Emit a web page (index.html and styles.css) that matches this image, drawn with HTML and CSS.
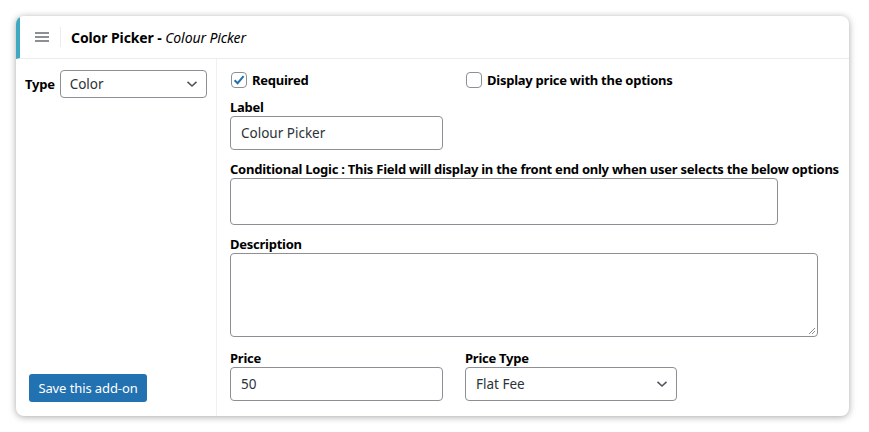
FILE: index.html
```html
<!DOCTYPE html>
<html>
<head>
<meta charset="utf-8">
<link rel="stylesheet" href="styles.css">
</head>
<body>
<div class="card">
  <div class="header">
    <span class="menu">
      <svg width="14" height="10" viewBox="0 0 14 10"><rect x="0" y="0" width="14" height="2" fill="#8c8f94"/><rect x="0" y="4" width="14" height="2" fill="#8c8f94"/><rect x="0" y="8" width="14" height="2" fill="#8c8f94"/></svg>
    </span>
    <span class="sep"></span>
    <span class="title"><b>Color Picker - </b><i>Colour Picker</i></span>
  </div>
  <div class="main">
    <div class="left">
      <div class="type-row">
        <span class="lbl">Type</span>
        <div class="select type-select"><span>Color</span>
          <svg class="chev" width="12" height="8" viewBox="0 0 12 8"><path d="M1.5 1.8 L6 6 L10.5 1.8" fill="none" stroke="#50575e" stroke-width="1.6"/></svg>
        </div>
      </div>
      <button class="save">Save this add-on</button>
    </div>
    <div class="right">
      <div class="row2 checks">
        <label class="check"><span class="box checked"><svg width="14" height="14" viewBox="0 0 14 14"><path d="M2.6 7.2 L5.6 10.2 L11.6 3.2" fill="none" stroke="#2271b1" stroke-width="2"/></svg></span><span class="lbl">Required</span></label>
        <label class="check"><span class="box"></span><span class="lbl">Display price with the options</span></label>
      </div>
      <div class="group">
        <span class="lbl">Label</span>
        <div class="input w213">Colour Picker</div>
      </div>
      <div class="group">
        <span class="lbl">Conditional Logic : This Field will display in the front end only when user selects the below options</span>
        <div class="input cond"></div>
      </div>
      <div class="group">
        <span class="lbl">Description</span>
        <div class="input desc">
          <svg class="grip" width="8" height="8" viewBox="0 0 8 8"><path d="M7 1 L1 7 M7 4 L4 7" stroke="#8c8f94" stroke-width="1"/></svg>
        </div>
      </div>
      <div class="row2 price-row">
        <div class="group">
          <span class="lbl">Price</span>
          <div class="input w213">50</div>
        </div>
        <div class="group">
          <span class="lbl">Price Type</span>
          <div class="select price-select"><span>Flat Fee</span>
            <svg class="chev" width="12" height="8" viewBox="0 0 12 8"><path d="M1.5 1.8 L6 6 L10.5 1.8" fill="none" stroke="#50575e" stroke-width="1.6"/></svg>
          </div>
        </div>
      </div>
    </div>
  </div>
</div>
</body>
</html>
```

FILE: styles.css
```css
* { box-sizing: border-box; }
body {
  margin: 0;
  padding: 16px 20px 16px 16px;
  background: #fff;
  font-family: "Noto Sans", "DejaVu Sans", sans-serif;
  color: #1d2327;
}
.card {
  width: 833px;
  height: 400px;
  background: #fff;
  border-radius: 8px;
  box-shadow: 0 1px 7px rgba(0,0,0,0.35);
  overflow: hidden;
  display: flex;
  flex-direction: column;
}
.header {
  height: 43px;
  flex: none;
  border-left: 4px solid #3fa9c2;
  border-bottom: 1px solid #ececec;
  display: flex;
  align-items: center;
  padding-left: 15px;
}
.menu { display: flex; width: 14px; }
.sep {
  width: 1px;
  height: 20px;
  background: #ececec;
  margin-left: 11px;
  margin-right: 10px;
}
.title { font-size: 14px; color: #000; letter-spacing: -0.1px; }
.title b { font-weight: 700; }
.main { flex: 1; display: flex; }
.left {
  width: 201px;
  flex: none;
  border-right: 1px solid #f0f0f0;
  padding: 11px 9px 14px 9px;
  display: flex;
  flex-direction: column;
  justify-content: space-between;
}
.type-row { display: flex; align-items: center; gap: 5px; }
.lbl {
  font-size: 13px;
  font-weight: 700;
  color: #000;
  line-height: 16px;
  letter-spacing: -0.25px;
}
.select, .input {
  border: 1px solid #8c8f94;
  border-radius: 4px;
  background: #fff;
  font-size: 13.5px;
  color: #2c3338;
  display: flex;
  align-items: center;
  position: relative;
}
.select { justify-content: space-between; padding: 0 8px 0 9px; }
.type-select { width: 148px; height: 28px; }
.price-select { width: 212px; height: 34px; padding-left: 10px; }
.chev { flex: none; }
.save {
  align-self: flex-start;
  margin-left: 4px;
  width: 118px;
  height: 28px;
  border: 0;
  border-radius: 3px;
  background: #2271b1;
  color: #fff;
  font-family: inherit;
  font-size: 13px;
  padding: 0;
  letter-spacing: -0.1px;
}
.right {
  flex: 1;
  padding: 11px 0 0 13px;
  display: flex;
  flex-direction: column;
  gap: 11px;
}
.row2 { display: grid; grid-template-columns: 235px 1fr; }
.checks { height: 20px; align-items: center; margin-bottom: -2px; }
.check { display: flex; align-items: center; gap: 5px; padding-left: 1px; }
.box {
  width: 16px;
  height: 16px;
  border: 1px solid #8c8f94;
  border-radius: 4px;
  display: flex;
  align-items: center;
  justify-content: center;
}
.group { display: flex; flex-direction: column; gap: 1px; }
.input { padding: 0 10px; }
.w213 { width: 213px; height: 34px; }
.cond { width: 548px; height: 47px; }
.desc { width: 588px; height: 84px; }
.grip { position: absolute; right: 1px; bottom: 1px; }
.price-row { margin-top: 2px; }
```
